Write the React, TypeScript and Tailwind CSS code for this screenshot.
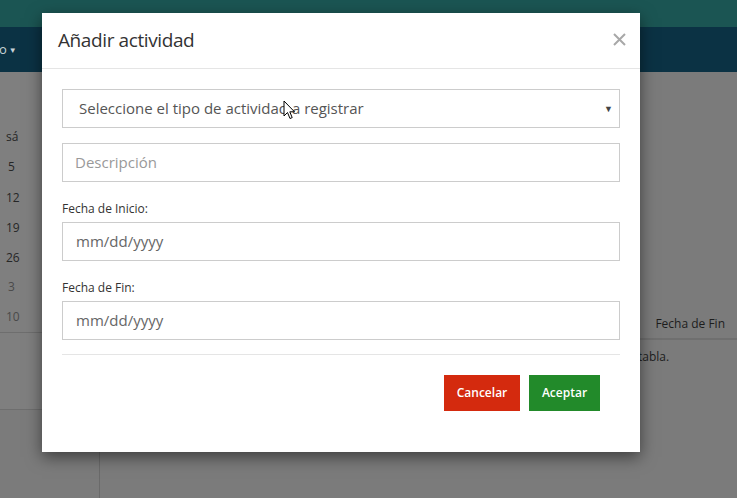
import React from "react";

export default function App() {
  const font = { fontFamily: '"Open Sans", "Noto Sans", sans-serif' };
  return (
    <div className="relative w-[737px] h-[498px] overflow-hidden bg-[#7b7b7b]" style={font}>
      {/* background page */}
      <div className="h-[27px] bg-[#1b5553]" />
      <div className="h-[45px] bg-[#0b3244] flex items-center text-[13px] text-[#c9d3d8]">
        <span className="-ml-[1px]">o</span>
        <span className="text-[8px] ml-[2px]">▼</span>
      </div>
      <div className="flex h-[426px]">
        <div className="w-[100px] flex flex-col">
          <div className="h-[338px] bg-[#7f7f7f] border-b border-[#6e6e6e] flex flex-col">
            <div className="h-[261px] border-b border-[#6e6e6e] pt-[49px] pl-[6px] flex flex-col text-[12px] text-[#262626]">
              <div className="h-[31px] flex items-center">sá</div>
              <div className="h-[30px] flex items-center pl-[2px]">5</div>
              <div className="h-[31px] flex items-center">12</div>
              <div className="h-[30px] flex items-center">19</div>
              <div className="h-[29px] flex items-center">26</div>
              <div className="h-[30px] flex items-center pl-[2px] text-[#4a4a4a]">3</div>
              <div className="h-[29px] flex items-center text-[#4a4a4a]">10</div>
            </div>
          </div>
          <div className="flex-1 border-r border-[#6a6a6a]" />
        </div>
        <div className="flex-1 flex flex-col">
          <div className="h-[238px]" />
          <div className="h-[30px] border-b-2 border-[#6f6f6f] flex items-center justify-end pr-[12px] text-[12px] text-[#1d1d1d]">
            Fecha de Fin
          </div>
          <div className="pl-[538px] pt-[8px] text-[12px] text-[#1d1d1d]">tabla.</div>
        </div>
      </div>

      {/* modal */}
      <div className="absolute left-[42px] top-[13px] w-[598px] h-[439px] bg-white shadow-[0_5px_15px_rgba(0,0,0,0.5)] flex flex-col">
        <div className="h-[56px] border-b border-[#e5e5e5] flex items-center justify-between pl-[16px] pr-[14px]">
          <span className="text-[19px] text-[#333] tracking-[-0.4px]">Añadir actividad</span>
          <svg width="13" height="13" viewBox="0 0 13 13" className="mt-[-2px]">
            <path d="M1 1 L12 12 M12 1 L1 12" stroke="#a8a8a8" strokeWidth="2" />
          </svg>
        </div>
        <div className="px-[20px] pt-[20px] flex flex-col">
          <div className="h-[39px] border border-[#cccccc] flex items-center justify-between pl-[16px] pr-[6px]">
            <span className="text-[15px] text-[#555]">Seleccione el tipo de actividad a registrar</span>
            <span className="text-[9px] text-[#444]">▼</span>
          </div>
          <div className="mt-[15px] h-[39px] border border-[#cccccc] flex items-center pl-[12px]">
            <span className="text-[15px] text-[#999]">Descripción</span>
          </div>
          <div className="mt-[18px] text-[12px] text-[#333] h-[18px] flex items-center">Fecha de Inicio:</div>
          <div className="mt-[4px] h-[39px] border border-[#cccccc] flex items-center pl-[13px]">
            <span className="text-[15px] text-[#666]">mm/dd/yyyy</span>
          </div>
          <div className="mt-[18px] text-[12px] text-[#333] h-[18px] flex items-center">Fecha de Fin:</div>
          <div className="mt-[4px] h-[39px] border border-[#cccccc] flex items-center pl-[13px]">
            <span className="text-[15px] text-[#666]">mm/dd/yyyy</span>
          </div>
          <div className="mt-[14px] border-t border-[#e5e5e5]" />
          <div className="mt-[20px] flex justify-end pr-[20px] gap-[9px]">
            <button className="w-[76px] h-[36px] bg-[#d42a0e] text-white text-[12px] font-semibold">Cancelar</button>
            <button className="w-[71px] h-[36px] bg-[#228a2a] text-white text-[12px] font-semibold">Aceptar</button>
          </div>
        </div>
      </div>

      {/* cursor */}
      <svg className="absolute left-[283px] top-[100px]" width="13" height="20" viewBox="0 0 13 20">
        <path d="M1 1 L1 16 L4.5 12.5 L7 18.5 L9.2 17.6 L6.8 11.8 L11.5 11.8 Z" fill="white" stroke="black" strokeWidth="1" strokeLinejoin="round" />
      </svg>
    </div>
  );
}
